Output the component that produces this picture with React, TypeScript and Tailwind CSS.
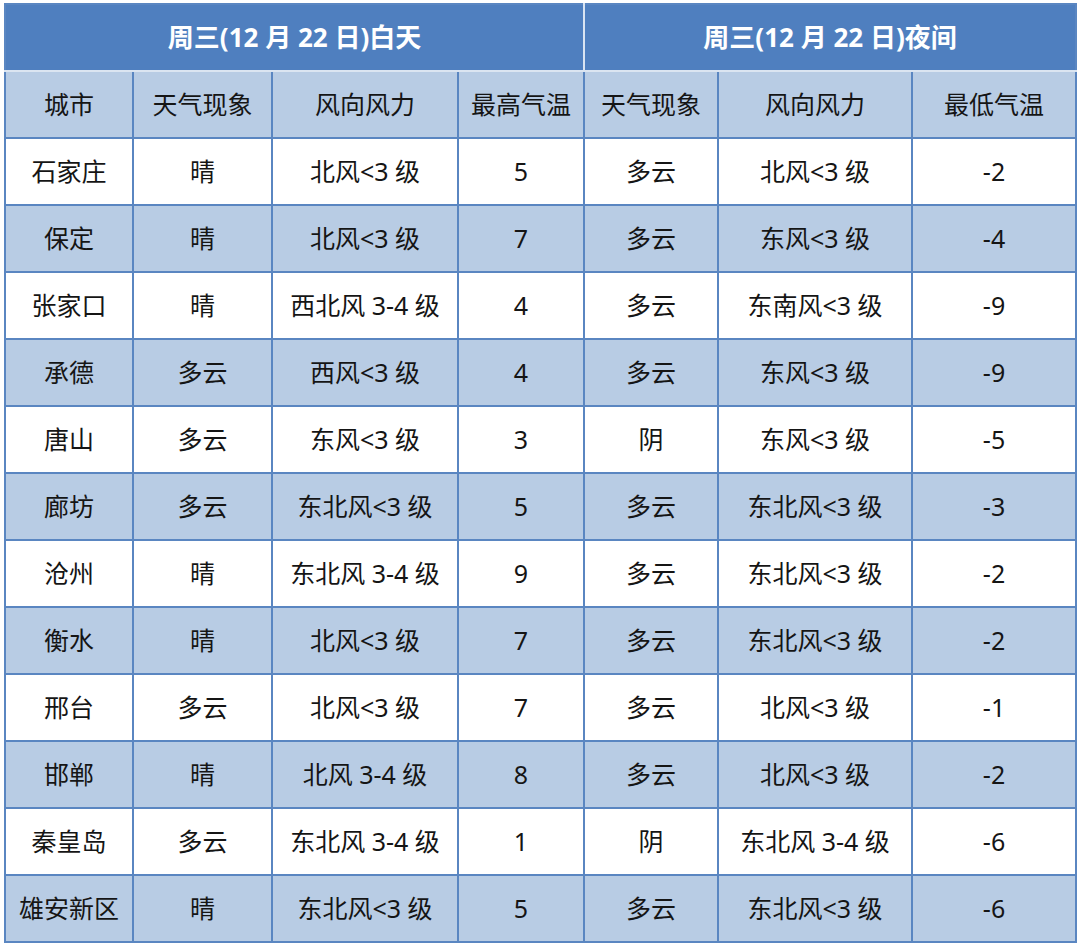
const rows = [
  ["石家庄", "晴", "北风<3 级", "5", "多云", "北风<3 级", "-2"],
  ["保定", "晴", "北风<3 级", "7", "多云", "东风<3 级", "-4"],
  ["张家口", "晴", "西北风 3-4 级", "4", "多云", "东南风<3 级", "-9"],
  ["承德", "多云", "西风<3 级", "4", "多云", "东风<3 级", "-9"],
  ["唐山", "多云", "东风<3 级", "3", "阴", "东风<3 级", "-5"],
  ["廊坊", "多云", "东北风<3 级", "5", "多云", "东北风<3 级", "-3"],
  ["沧州", "晴", "东北风 3-4 级", "9", "多云", "东北风<3 级", "-2"],
  ["衡水", "晴", "北风<3 级", "7", "多云", "东北风<3 级", "-2"],
  ["邢台", "多云", "北风<3 级", "7", "多云", "北风<3 级", "-1"],
  ["邯郸", "晴", "北风 3-4 级", "8", "多云", "北风<3 级", "-2"],
  ["秦皇岛", "多云", "东北风 3-4 级", "1", "阴", "东北风 3-4 级", "-6"],
  ["雄安新区", "晴", "东北风<3 级", "5", "多云", "东北风<3 级", "-6"],
];

const heads = ["城市", "天气现象", "风向风力", "最高气温", "天气现象", "风向风力", "最低气温"];
const widths = [128, 139, 186, 126, 134, 194, 164];

export default function App() {
  return (
    <div className="w-[1080px] h-[945px] bg-white pt-[3px] pl-[4px]">
      <table
        className="table-fixed border-collapse w-[1072px] text-[25px] text-[#151515] text-center"
        style={{ fontFamily: '"Noto Sans", "Noto Sans CJK SC", sans-serif' }}
      >
        <colgroup>
          {widths.map((w, i) => (
            <col key={i} style={{ width: w }} />
          ))}
        </colgroup>
        <thead>
          <tr className="h-[67px] bg-[#4f7fbf] text-white text-[26px]">
            <th colSpan={4} className="border-2 border-[#5a86c1] border-r-[#d9e4f2] border-b-[#dbe5f1] font-bold">
              周三(12 月 22 日)白天
            </th>
            <th colSpan={3} className="border-2 border-[#5a86c1] border-b-[#dbe5f1] font-bold">
              周三(12 月 22 日)夜间
            </th>
          </tr>
          <tr className="h-[67px] bg-[#b8cce4]">
            {heads.map((h, i) => (
              <th key={i} className="border-2 border-[#5a86c1] font-normal">
                {h}
              </th>
            ))}
          </tr>
        </thead>
        <tbody>
          {rows.map((r, i) => (
            <tr key={i} className={i % 2 === 1 ? "h-[67px] bg-[#b8cce4]" : "h-[67px] bg-white"}>
              {r.map((c, j) => (
                <td key={j} className="border-2 border-[#5a86c1] whitespace-nowrap p-0">
                  {c}
                </td>
              ))}
            </tr>
          ))}
        </tbody>
      </table>
    </div>
  );
}
